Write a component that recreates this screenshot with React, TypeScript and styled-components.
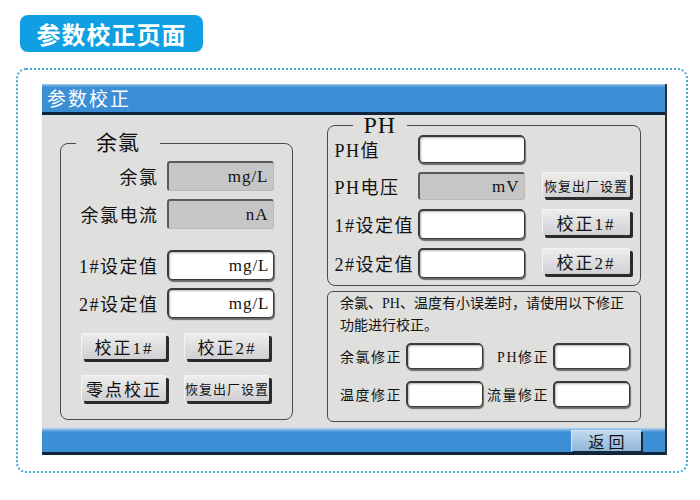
import React from "react";
import styled, { createGlobalStyle } from "styled-components";

const Global = createGlobalStyle`
  html, body { margin: 0; padding: 0; background: #ffffff; }
  body { font-family: "Liberation Serif", "Noto Sans CJK SC", serif; color: #111; }
  * { box-sizing: border-box; }
`;

const Page = styled.div`
  width: 700px;
  height: 500px;
  padding: 15px 0 0 16px;
`;

const TitlePill = styled.div`
  margin-left: 4px;
  width: 183px;
  height: 37px;
  border-radius: 8px;
  background: #0f9fe2;
  color: #fff;
  font-family: "Noto Sans CJK SC", sans-serif;
  font-weight: 700;
  font-size: 24px;
  letter-spacing: 1px;
  line-height: 37px;
  text-align: center;
`;

const Frame = styled.div`
  margin-top: 16px;
  width: 672px;
  height: 405px;
  border: 2px dotted #3fa6d6;
  border-radius: 10px;
  padding: 14px 0 0 24px;
`;

const Panel = styled.div`
  width: 623px;
  display: flex;
  flex-direction: column;
  box-shadow: 2px 0 0 #2a2f36;
`;

const TitleBar = styled.div`
  height: 31px;
  background: linear-gradient(#a9cdec 0px, #3d8fd6 3px, #3b8dd4 100%);
  border-bottom: 3px solid #10233a;
  color: #fff;
  font-family: "Noto Sans CJK SC", sans-serif;
  font-size: 19px;
  letter-spacing: 2px;
  line-height: 28px;
  padding-left: 5px;
`;

const Body = styled.div`
  height: 312px;
  background: #dfdfdd;
  display: flex;
  align-items: flex-start;
  padding-left: 18px;
  gap: 34px;
`;

const Group = styled.fieldset<{ $w: number; $h: number; $mt: number; $pad: string }>`
  margin: ${(p) => p.$mt}px 0 0 0;
  width: ${(p) => p.$w}px;
  height: ${(p) => p.$h}px;
  border: 1.5px solid #4a4a4a;
  border-radius: 8px;
  padding: ${(p) => p.$pad};
  min-width: 0;
`;

const Legend = styled.legend<{ $size: number; $lh: number; $px: number; $ml: number }>`
  font-size: ${(p) => p.$size}px;
  line-height: ${(p) => p.$lh}px;
  padding: 0 ${(p) => p.$px}px;
  margin-left: ${(p) => p.$ml}px;
  color: #111;
  letter-spacing: 1px;
`;

const FormGrid = styled.div<{ $mt: number }>`
  margin-top: ${(p) => p.$mt}px;
  display: grid;
  grid-template-columns: 1fr 107px;
  column-gap: 8px;
  row-gap: 8px;
  grid-auto-rows: 30px;
  align-items: center;
`;

const Label = styled.div<{ $size?: number; $align?: string }>`
  font-size: ${(p) => p.$size ?? 18}px;
  letter-spacing: 1.5px;
  text-align: ${(p) => p.$align ?? "right"};
  white-space: nowrap;
  color: #111;
`;

const ReadField = styled.div`
  height: 100%;
  background: #c6c6c6;
  border-radius: 3px;
  border-top: 2px solid #5a5a5a;
  border-left: 2px solid #5a5a5a;
  border-right: 1px solid #b9b9b9;
  border-bottom: 1px solid #b9b9b9;
  display: flex;
  align-items: center;
  justify-content: flex-end;
  padding-right: 4px;
  font-size: 17px;
  letter-spacing: 1px;
`;

const InputField = styled.div<{ $h?: number }>`
  height: ${(p) => (p.$h ? `${p.$h}px` : "100%")};
  background: #ffffff;
  border-radius: 5px;
  border: 1px solid #3a3a3a;
  border-top-width: 2px;
  border-left-width: 2px;
  box-shadow: 1px 2px 1px #6b6b6b, inset 1px 1px 2px #b5b5b5;
  display: flex;
  align-items: center;
  justify-content: flex-end;
  padding-right: 3px;
  font-size: 17px;
  letter-spacing: 1px;
`;

const ButtonGrid = styled.div`
  margin-top: 15px;
  padding-left: 5px;
  display: grid;
  grid-template-columns: 85px 85px;
  column-gap: 18px;
  row-gap: 16px;
`;

const Button = styled.button<{ $small?: boolean; $h?: number }>`
  width: 100%;
  height: ${(p) => p.$h ?? 26}px;
  margin: 0;
  padding: 0;
  border: none;
  border-top: 1px solid #f4f4f4;
  border-left: 1px solid #f4f4f4;
  border-radius: 2px;
  background: linear-gradient(#ededed, #d0d0d4);
  box-shadow: 3px 3px 0 #2b2b2b;
  font-family: "Liberation Serif", "Noto Sans CJK SC", serif;
  font-size: ${(p) => (p.$small ? 13 : 17)}px;
  letter-spacing: ${(p) => (p.$small ? 1 : 2)}px;
  color: #111;
  white-space: nowrap;
  cursor: pointer;
`;

const RightCol = styled.div`
  width: 314px;
  display: flex;
  flex-direction: column;
  gap: 5px;
`;

const PhGrid = styled.div`
  display: grid;
  grid-template-columns: 83px 107px 17px 88px;
  grid-template-rows: 28px 28px 30px 30px;
  row-gap: 9px;
  align-items: center;
  & > button { grid-column: 4; align-self: start; }
`;

const Spacer = styled.span`
  grid-column: span 2;
`;

const NoteBox = styled.div`
  height: 131px;
  border: 1.5px solid #4a4a4a;
  border-radius: 6px;
  padding: 1px 10px 0 12px;
`;

const NoteText = styled.p`
  margin: 0;
  font-size: 14px;
  line-height: 22px;
  color: #111;
`;

const CorrGrid = styled.div`
  margin-top: 6px;
  display: grid;
  grid-template-columns: 1fr 77px 1fr 77px;
  grid-auto-rows: 26px;
  column-gap: 4px;
  row-gap: 12px;
  align-items: center;
  width: 289px;
`;

const BottomBar = styled.div`
  height: 28px;
  background: linear-gradient(#dfe7ee 0px, #9cc2e6 2px, #3d8fd6 5px, #3b8dd4 100%);
  border-bottom: 3px solid #10233a;
  display: flex;
  justify-content: flex-end;
  align-items: flex-start;
  padding: 3px 24px 0 0;
`;

const BackButton = styled.button`
  width: 70px;
  height: 21px;
  margin: 0;
  padding: 0;
  border: none;
  border-top: 1px solid #d6e6f3;
  border-left: 1px solid #d6e6f3;
  background: linear-gradient(#c0d9ee, #8fb6da);
  box-shadow: 2px 2px 0 #16283c;
  font-family: "Noto Sans CJK SC", sans-serif;
  font-size: 16px;
  line-height: 18px;
  letter-spacing: 4px;
  text-indent: 4px;
  color: #111;
  cursor: pointer;
`;

export default function App() {
  return (
    <>
      <Global />
      <Page>
        <TitlePill>参数校正页面</TitlePill>
        <Frame>
          <Panel>
            <TitleBar>参数校正</TitleBar>
            <Body>
              <Group $w={233} $h={290} $mt={15} $pad="0 18.5px 0 15px">
                <Legend $size={21} $lh={26} $px={20} $ml={0}>余氯</Legend>
                <FormGrid $mt={5}>
                  <Label>余氯</Label>
                  <ReadField>mg/L</ReadField>
                  <Label>余氯电流</Label>
                  <ReadField>nA</ReadField>
                </FormGrid>
                <FormGrid $mt={21}>
                  <Label>1#设定值</Label>
                  <InputField>mg/L</InputField>
                  <Label>2#设定值</Label>
                  <InputField>mg/L</InputField>
                </FormGrid>
                <ButtonGrid>
                  <Button>校正1#</Button>
                  <Button>校正2#</Button>
                  <Button>零点校正</Button>
                  <Button $small>恢复出厂设置</Button>
                </ButtonGrid>
              </Group>
              <RightCol>
                <Group $w={314} $h={171} $mt={0} $pad="0 9.5px 6px 6.5px">
                  <Legend $size={24} $lh={20} $px={11} $ml={18}>PH</Legend>
                  <PhGrid>
                    <Label $align="left">PH值</Label>
                    <InputField />
                    <Spacer />
                    <Label $align="left">PH电压</Label>
                    <ReadField>mV</ReadField>
                    <Button $small $h={25}>恢复出厂设置</Button>
                    <Label $align="left">1#设定值</Label>
                    <InputField />
                    <Button $h={26}>校正1#</Button>
                    <Label $align="left">2#设定值</Label>
                    <InputField />
                    <Button $h={26}>校正2#</Button>
                  </PhGrid>
                </Group>
                <NoteBox>
                  <NoteText>
                    余氯、PH、温度有小误差时，请使用以下修正
                    <br />
                    功能进行校正。
                  </NoteText>
                  <CorrGrid>
                    <Label $size={14}>余氯修正</Label>
                    <InputField />
                    <Label $size={14}>PH修正</Label>
                    <InputField />
                    <Label $size={14}>温度修正</Label>
                    <InputField />
                    <Label $size={14}>流量修正</Label>
                    <InputField />
                  </CorrGrid>
                </NoteBox>
              </RightCol>
            </Body>
            <BottomBar>
              <BackButton>返回</BackButton>
            </BottomBar>
          </Panel>
        </Frame>
      </Page>
    </>
  );
}
